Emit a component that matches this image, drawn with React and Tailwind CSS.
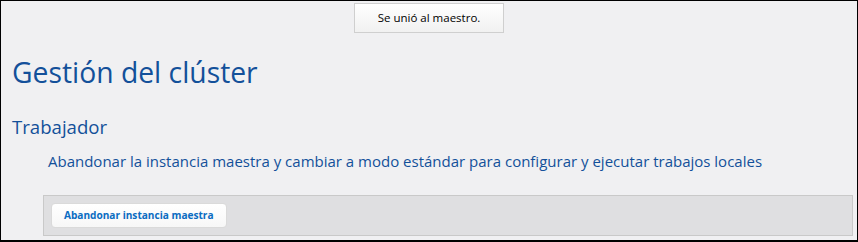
export default function App() {
  return (
    <div className="relative w-[858px] h-[242px] border border-black border-b-2 bg-[#f0f0f2] overflow-hidden font-['Open_Sans',sans-serif]">
      {/* toast */}
      <div className="absolute left-[353px] top-[2px] w-[150px] h-[30px] border border-[#cfcfcf] bg-gradient-to-b from-white to-[#f1f1f1] flex items-center justify-center text-[11.5px] text-black">
        Se unió al maestro.
      </div>

      <div className="pt-[51px] pl-[11px] pr-[4px]">
        <h1 className="text-[28.3px] leading-[40px] text-[#13509a]">Gestión del clúster</h1>
        <h2 className="mt-[21px] text-[18.6px] leading-[28px] text-[#13509a]">Trabajador</h2>
        <p className="mt-[10px] ml-[36px] text-[15px] leading-[20px] text-[#13509a]">
          Abandonar la instancia maestra y cambiar a modo estándar para configurar y ejecutar trabajos locales
        </p>
        <div className="mt-[24px] ml-[31px] h-[41px] border border-[#c9c9c9] bg-[#dfdfe1] px-[7px] flex items-center">
          <button className="h-[25px] px-[12px] rounded-[4px] border border-[#dadada] bg-gradient-to-b from-white to-[#f7f7f7] text-[10.1px] font-bold text-[#0a6cc2]">
            Abandonar instancia maestra
          </button>
        </div>
      </div>
    </div>
  );
}
